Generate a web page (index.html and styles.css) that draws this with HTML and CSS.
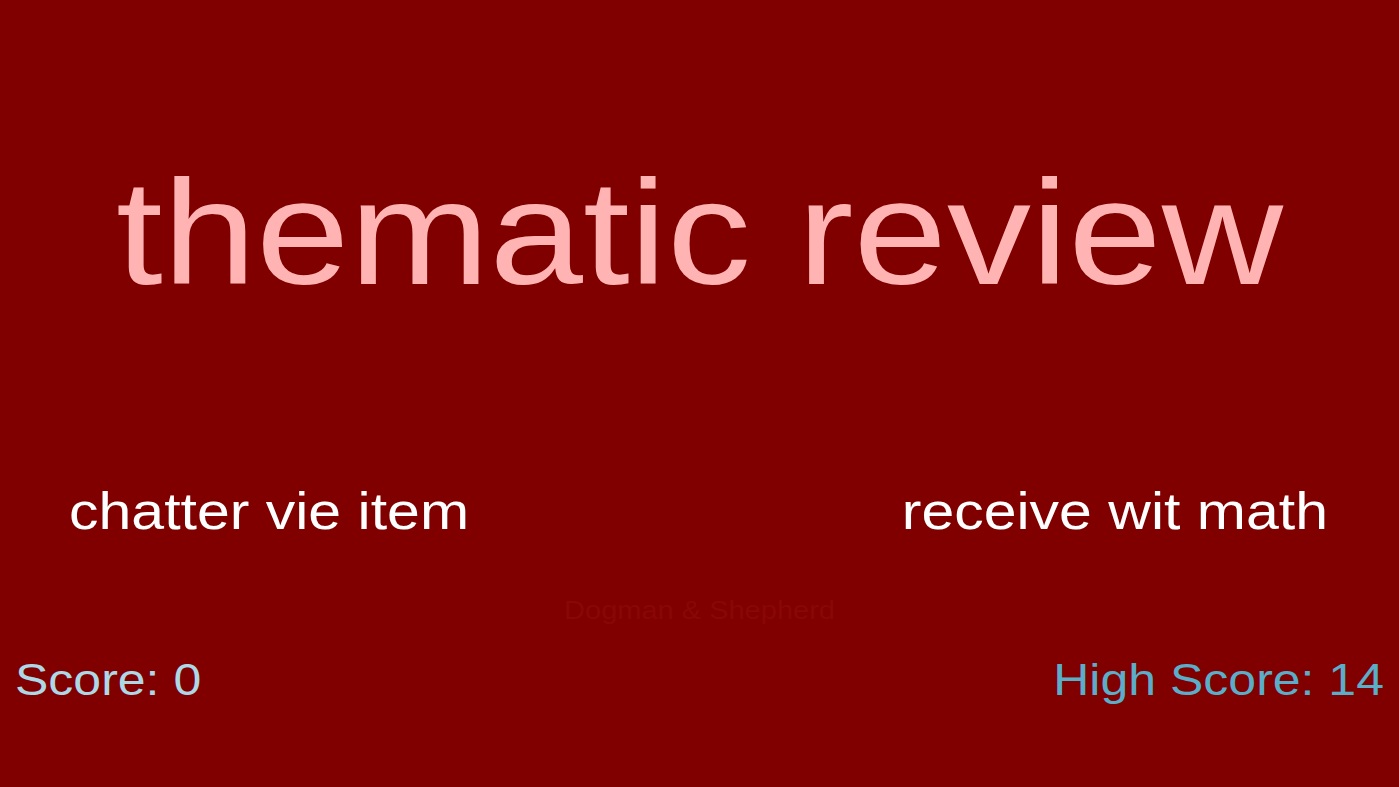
FILE: index.html
```html
<!DOCTYPE html>
<html lang="en">
<head>
<meta charset="utf-8">
<title>thematic review</title>
<link rel="stylesheet" href="styles.css">
</head>
<body>
<main class="game">
  <h1 class="prompt">thematic review</h1>
  <div class="choices">
    <div class="choice">chatter vie item</div>
    <div class="choice">receive wit math</div>
  </div>
  <div class="feedback">Dogman &amp; Shepherd</div>
  <div class="scores">
    <div class="score">Score: 0</div>
    <div class="high-score">High Score: 14</div>
  </div>
</main>
</body>
</html>
```

FILE: styles.css
```css
html, body {
  margin: 0;
  padding: 0;
  height: 100%;
  background: #800000;
  overflow: hidden;
}

.game {
  display: flex;
  flex-direction: column;
  height: 787px;
  padding-top: 142px;
  box-sizing: border-box;
  font-family: "Liberation Sans", Arial, sans-serif;
}

.prompt,
.choices,
.feedback,
.scores {
  transform: scaleY(0.88);
  transform-origin: 50% 85%;
}

.prompt {
  margin: 0;
  font-size: 168px;
  font-weight: normal;
  line-height: 1;
  color: #ffb3b3;
  text-align: center;
  white-space: nowrap;
}

.choices {
  display: flex;
  justify-content: space-between;
  margin-top: 170px;
  padding: 0 71px 0 69px;
  font-size: 59px;
  line-height: 1;
  color: #ffffff;
}

.feedback {
  margin-top: 56px;
  font-size: 29px;
  line-height: 1;
  text-align: center;
  color: #880707;
}

.scores {
  display: flex;
  justify-content: space-between;
  margin-top: 29px;
  padding: 0 15px 0 15px;
  font-size: 50px;
  line-height: 1;
}

.score {
  color: #add8e6;
}

.high-score {
  color: #5aaec9;
}
```
